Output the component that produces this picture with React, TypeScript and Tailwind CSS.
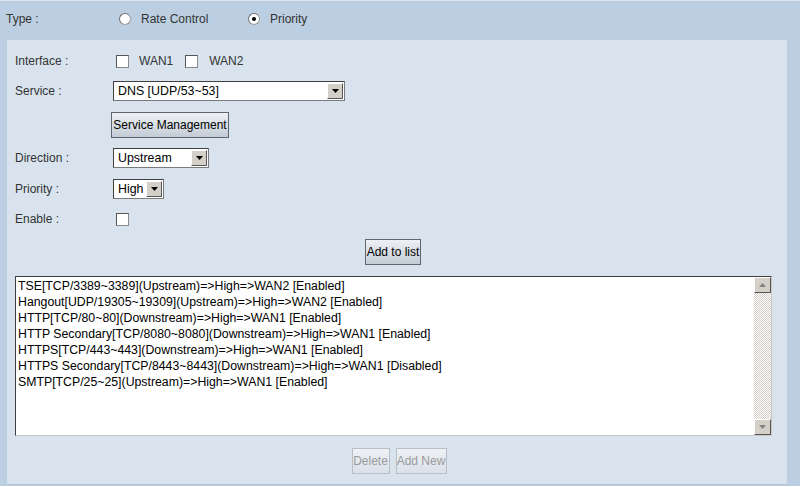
import React from 'react';

const rules = [
  'TSE[TCP/3389~3389](Upstream)=>High=>WAN2 [Enabled]',
  'Hangout[UDP/19305~19309](Upstream)=>High=>WAN2 [Enabled]',
  'HTTP[TCP/80~80](Downstream)=>High=>WAN1 [Enabled]',
  'HTTP Secondary[TCP/8080~8080](Downstream)=>High=>WAN1 [Enabled]',
  'HTTPS[TCP/443~443](Downstream)=>High=>WAN1 [Enabled]',
  'HTTPS Secondary[TCP/8443~8443](Downstream)=>High=>WAN1 [Disabled]',
  'SMTP[TCP/25~25](Upstream)=>High=>WAN1 [Enabled]',
];

const Radio: React.FC<{ checked?: boolean }> = ({ checked }) => (
  <span className="relative inline-block w-[12px] h-[12px] rounded-full bg-white border border-[#9a9a9a] border-t-[#6f6f6f] border-l-[#6f6f6f]">
    {checked && <span className="absolute left-[3px] top-[3px] w-[4px] h-[4px] rounded-full bg-black" />}
  </span>
);

const Checkbox: React.FC = () => (
  <span className="inline-block w-[13px] h-[13px] bg-white border border-[#8a8a8a] border-t-[#555] border-l-[#555]" />
);

const Arrow: React.FC = () => (
  <span className="flex items-center justify-center w-[16px] h-full bg-[#d4d0c8] border border-[#fff] border-r-[#555] border-b-[#555]">
    <svg width="7" height="4" viewBox="0 0 7 4">
      <path d="M0 0h7L3.5 4z" fill="#000" />
    </svg>
  </span>
);

const Select: React.FC<{ value: string; width: string }> = ({ value, width }) => (
  <div className={`flex h-[20px] bg-white border border-[#7a7a7a] border-t-[#404040] border-l-[#404040] p-[1px] ${width}`}>
    <span className="flex-1 pl-[3px] text-[12.4px] leading-[16px] text-black">{value}</span>
    <Arrow />
  </div>
);

const Button: React.FC<{ children: React.ReactNode; className?: string; disabled?: boolean }> = ({ children, className, disabled }) => (
  <div
    className={`flex items-center justify-center h-[26px] text-[12px] bg-gradient-to-b from-[#eef1f4] to-[#c3ccd6] border ${
      disabled ? 'text-[#9a9a9a] border-[#b8bec6] from-[#e2e8ef] to-[#d9e1ea]' : 'text-black border-[#5e6670]'
    } ${className ?? ''}`}
  >
    {children}
  </div>
);

const Label: React.FC<{ children: React.ReactNode }> = ({ children }) => (
  <div className="w-[98px] pl-[8px] text-[12px] text-[#333]">{children}</div>
);

export default function App() {
  return (
    <div
      className="w-[802px] h-[487px] bg-white"
      style={{ fontFamily: '"Liberation Sans", Arial, sans-serif' }}
    >
      <div className="w-[800px] h-[486px] bg-[#bccfe2] border-t border-[#dde6ef] flex flex-col">
        <div className="h-[39px] flex items-center pl-[6px] pb-[4px] text-[12px] text-[#333]">
          <span className="w-[113px]">Type :</span>
          <Radio />
          <span className="ml-[10px] w-[107px]">Rate Control</span>
          <Radio checked />
          <span className="ml-[10px]">Priority</span>
        </div>
        <div className="ml-[7px] w-[780px] h-[445px] bg-[#d8e3ee] border-b border-[#b5c3d0] pt-[13px] flex flex-col">
          <div className="flex items-center h-[16px]">
            <Label>Interface :</Label>
            <span className="ml-[11px] flex items-center text-[12px] text-[#333]">
              <Checkbox />
              <span className="ml-[10px]">WAN1</span>
              <span className="ml-[12px] flex"><Checkbox /></span>
              <span className="ml-[11px]">WAN2</span>
            </span>
          </div>
          <div className="flex items-center mt-[12px]">
            <Label>Service :</Label>
            <div className="ml-[8px]">
              <Select value="DNS [UDP/53~53]" width="w-[232px]" />
            </div>
          </div>
          <div className="mt-[11px] pl-[104px]">
            <Button className="w-[118px]">Service Management</Button>
          </div>
          <div className="flex items-center mt-[10px]">
            <Label>Direction :</Label>
            <div className="ml-[8px]">
              <Select value="Upstream" width="w-[96px]" />
            </div>
          </div>
          <div className="flex items-center mt-[11px]">
            <Label>Priority :</Label>
            <div className="ml-[8px]">
              <Select value="High" width="w-[51px]" />
            </div>
          </div>
          <div className="flex items-center mt-[11px]">
            <Label>Enable :</Label>
            <span className="ml-[11px] flex"><Checkbox /></span>
          </div>
          <div className="mt-[11px] flex justify-center pr-[8px]">
            <Button className="w-[56px]">Add to list</Button>
          </div>
          <div className="mt-[11px] ml-[8px] w-[757px] h-[160px] flex bg-white border border-[#c8c8c8] border-t-[#404040] border-l-[#404040]">
            <div className="flex-1 pt-[1px] pl-[2px] text-[12.3px] leading-[16px] text-black">
              {rules.map((r) => (
                <div key={r}>{r}</div>
              ))}
            </div>
            <div
              className="w-[17px] flex flex-col justify-between"
              style={{ backgroundImage: 'repeating-conic-gradient(#d4d0c8 0% 25%, #ffffff 0% 50%)', backgroundSize: '2px 2px' }}
            >
              <span className="flex items-center justify-center h-[16px] bg-[#d4d0c8] border border-white border-r-[#555] border-b-[#555]">
                <svg width="7" height="4" viewBox="0 0 7 4"><path d="M0 4h7L3.5 0z" fill="#808080" /></svg>
              </span>
              <span className="flex items-center justify-center h-[16px] bg-[#d4d0c8] border border-white border-r-[#555] border-b-[#555]">
                <svg width="7" height="4" viewBox="0 0 7 4"><path d="M0 0h7L3.5 4z" fill="#808080" /></svg>
              </span>
            </div>
          </div>
          <div className="mt-[12px] flex justify-center gap-[6px] pl-[4px]">
            <Button disabled className="w-[38px]">Delete</Button>
            <Button disabled className="w-[51px]">Add New</Button>
          </div>
        </div>
      </div>
    </div>
  );
}
